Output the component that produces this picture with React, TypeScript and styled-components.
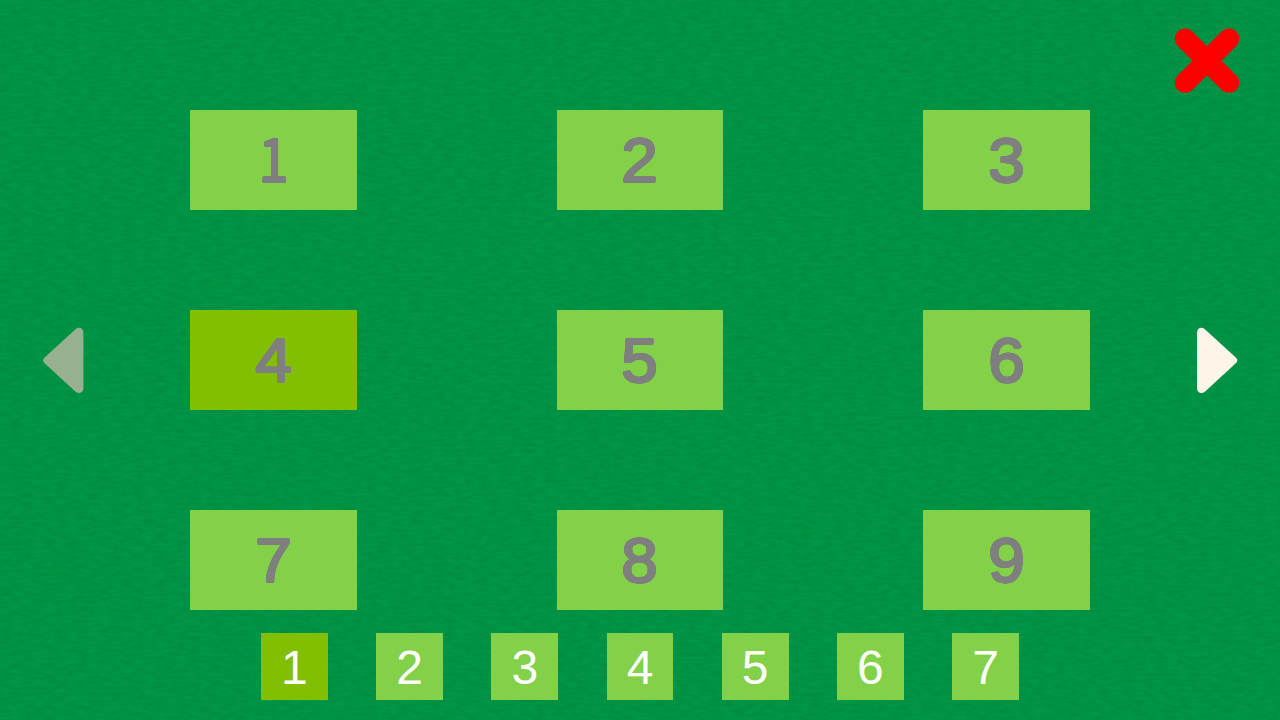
import { useState } from "react";
import styled, { createGlobalStyle } from "styled-components";

// thickens the glyphs with round corners, text-stroke leaves them pointed
const roundOutline = (radius:number, color:string) => Array.from({length:16}, (_, i)=> {
  const angle = i * Math.PI / 8;
  return `${(Math.cos(angle) * radius).toFixed(2)}px ${(Math.sin(angle) * radius).toFixed(2)}px 0 ${color}`;
}).join(",");

const GlobalStyle = createGlobalStyle`
  body{
    margin:0;
    overflow: hidden;
    background-color:#009245;
  }
`;

const Screen = styled.main`
  position: relative;
  isolation: isolate;
  box-sizing: border-box;
  display: grid;
  grid-template-columns: 190px 1fr 190px;
  grid-template-rows: 110px 500px 1fr;
  width:1280px;
  height:720px;
  background-color:#009245;
  font-family: "Liberation Sans", Arial, sans-serif;
`;

const Felt = styled.svg`
  position: absolute;
  inset:0;
  z-index:-1;
  width: 100%;
  height: 100%;
`;

const Header = styled.header`
  grid-column: 1 / -1;
  display: flex;
  justify-content: flex-end;
  padding:28px 40px 0 0;
`;

const IconButton = styled.button<{$width:number}>`
  display: block;
  width:${props=>props.$width}px;
  height:66px;
  padding:0;
  border:none;
  background: none;
  color:#fdf6e8;
  svg{
    display: block;
    overflow: visible;
  }
  &:disabled{
    color:#97b090;
  }
`;

const Side = styled.div<{$right?:boolean}>`
  display: flex;
  align-items: center;
  justify-content: ${props=>props.$right ? "flex-end" : "flex-start"};
  padding:0 42px;
`;

const Levels = styled.div`
  display: grid;
  grid-template-columns: repeat(3, 166.67px);
  grid-template-rows: repeat(3, 100px);
  justify-content: space-between;
  align-content: space-between;
`;

const Tile = styled.button<{$active:boolean}>`
  display: flex;
  align-items: center;
  justify-content: center;
  padding:0;
  border:none;
  background-color:${props=>props.$active ? "#81bf00" : "#83d148"};
  font-family: inherit;
`;

const Level = styled(Tile)`
  color:#7f7f7f;
  font-size: 63px;
  line-height: 100px;
`;

const Digit = styled.span`
  display: block;
  -webkit-text-stroke: 1.4px #7f7f7f;
  text-shadow: ${roundOutline(1.1, "#7f7f7f")};
  transform: scaleX(1.04);
`;

const SlimOne = styled.span`
  display: block;
  font-family: "Noto Sans CJK JP", sans-serif;
  font-size: 60px;
  text-shadow: ${roundOutline(1, "#7f7f7f")};
  transform: translateY(-4px) scaleX(.9);
`;

const Pages = styled.nav`
  grid-column: 1 / -1;
  display: flex;
  justify-content: center;
  gap:48.55px;
  padding-top:23.33px;
`;

const Page = styled(Tile)`
  width:66.67px;
  height:66.67px;
  padding-top:2px;
  color:#fff;
  font-size: 48px;
  line-height: 66px;
`;

const levels = [1, 2, 3, 4, 5, 6, 7, 8, 9];
const pages = [1, 2, 3, 4, 5, 6, 7];

function Arrow({flip}:{flip?:boolean}){
  return <svg width="42" height="66" viewBox="0 0 42 66">
    <path
      d="M1 5.5C1 .8 5.2-1 8.6 1.5L39.8 30.2Q43 33 39.8 35.8L8.6 64.5C5.2 67 1 65.2 1 60.5Z"
      fill="currentColor"
      transform={flip ? "translate(42.4 .4) scale(-1 1)" : "translate(0 .4)"}
    />
  </svg>;
}

function App(){
  const [level, setLevel] = useState(4);
  const [page, setPage] = useState(1);
  return <>
    <GlobalStyle />
    <Screen>
      <Felt>
        <filter id="felt" x="0" y="0" width="100%" height="100%" colorInterpolationFilters="sRGB">
          <feTurbulence type="fractalNoise" baseFrequency=".09 .3" numOctaves="2" seed="8" />
          <feColorMatrix values="0 0 0 0 0  .07 0 0 0 .537  .07 0 0 0 .235  0 0 0 0 1" />
        </filter>
        <rect width="100%" height="100%" filter="url(#felt)" />
      </Felt>
      <Header>
        <IconButton $width={66} aria-label="Close">
          <svg width="66" height="66" viewBox="0 0 66 66">
            <path d="M11 10.8L55 54.8M55 10.8L11 54.8" stroke="#f00" strokeWidth="20.6" strokeLinecap="round" />
          </svg>
        </IconButton>
      </Header>
      <Side>
        <IconButton $width={42} aria-label="Previous page" disabled={page === 1} onClick={()=> setPage(page - 1)}>
          <Arrow flip />
        </IconButton>
      </Side>
      <Levels>
        {levels.map(n=><Level key={n} $active={n === level} onClick={()=> setLevel(n)}>
          {n === 1 ? <SlimOne>{n}</SlimOne> : <Digit>{n}</Digit>}
        </Level>)}
      </Levels>
      <Side $right>
        <IconButton $width={42} aria-label="Next page" disabled={page === pages.length} onClick={()=> setPage(page + 1)}>
          <Arrow />
        </IconButton>
      </Side>
      <Pages>
        {pages.map(n=><Page key={n} $active={n === page} onClick={()=> setPage(n)}>{n}</Page>)}
      </Pages>
    </Screen>
  </>;
}
export default App;
